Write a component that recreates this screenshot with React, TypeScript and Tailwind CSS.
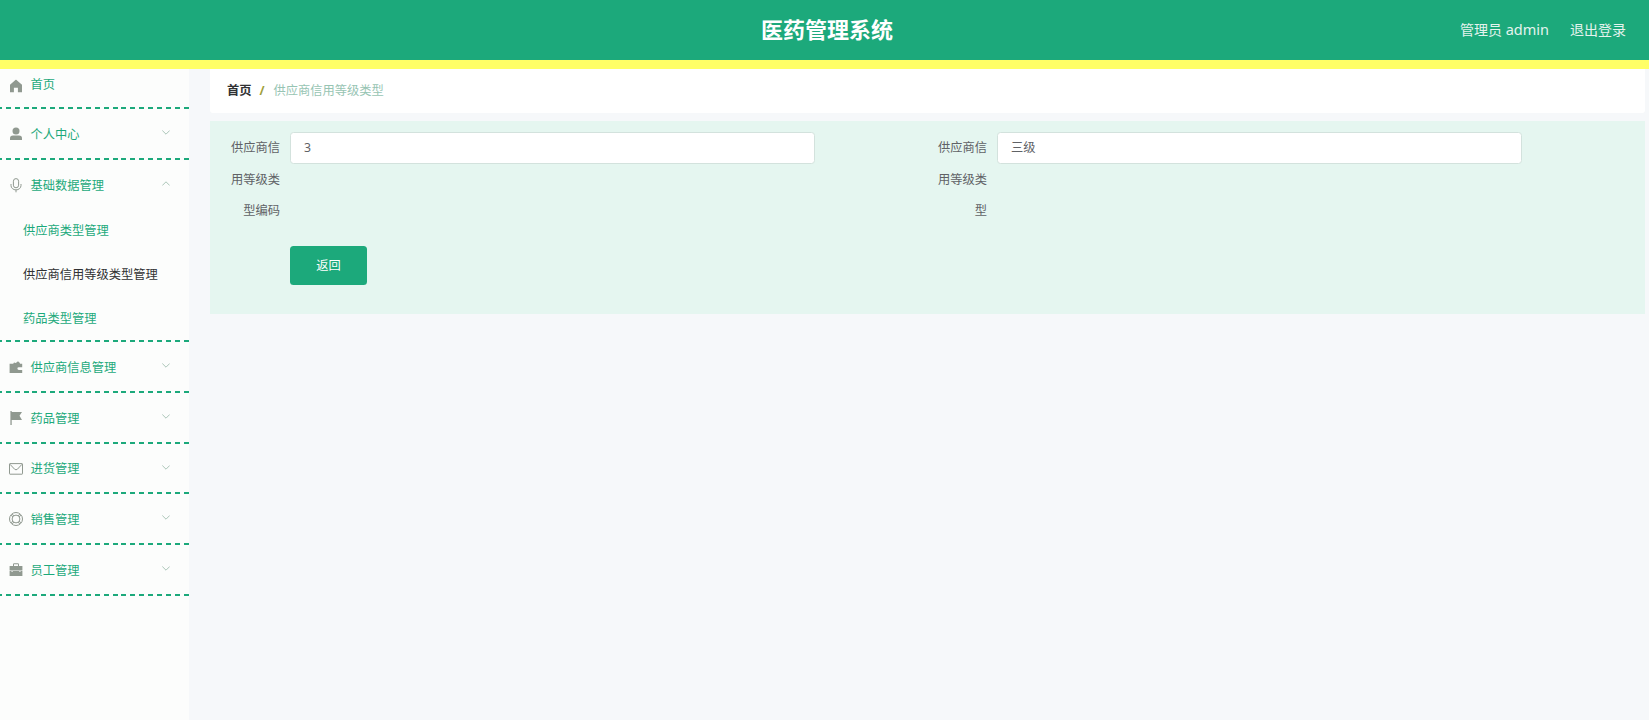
import type { ReactNode } from "react";

const icons: Record<string, ReactNode> = {
  home: <path d="M7.200 .8Q7 .6 6.700.8L1 5.800v7.400h3.900V8.800h4v4.400H13V5.800z" fill="currentColor" />,
  user: (
    <g fill="currentColor">
      <circle cx="7" cy="4" r="3.500" />
      <path d="M1 12.900v-1.600Q1 8.600 4 8.600h6q3 0 3 2.700v1.600z" />
    </g>
  ),
  mic: (
    <g fill="none" stroke="currentColor" strokeWidth="1">
      <rect x="4.400" y=".6" width="5.200" height="9.200" rx="2.600" />
      <path d="M2 6v1.500a5 4.400 0 0 0 10 0V6M7 11.900V14.300" />
    </g>
  ),
  wallet: (
    <path
      d="M.6 3.800h3.600L5 2.600l1.800.5L9 1.200l1.900 1.900v.7h2.300v3.400H9.800a1.400 1.400 0 0 0 0 2.800h3.400v3H.6z"
      fill="currentColor"
    />
  ),
  flag: <path d="M1.400 0h1.300V1H13L10.500 4.700 13 9H2.700V14H1.400z" fill="currentColor" />,
  message: (
    <g fill="none" stroke="currentColor" strokeWidth="1">
      <rect x=".5" y="1.600" width="13" height="10.600" rx=".5" />
      <path d="m1 2.300 4.700 5q1.300 1 2.600 0L13 2.300" />
    </g>
  ),
  help: (
    <g fill="none" stroke="currentColor" strokeWidth="1">
      <circle cx="7" cy="7" r="6.500" />
      <circle cx="7" cy="7" r="3.900" />
      <path d="m3.300 2 1.400 1.900m4.600 6.200 1.400 1.900M12 3.300l-1.900 1.400m-6.200 4.600L2 10.700M10.700 2 9.300 3.900m-4.600 6.200L3.300 12M2 3.300l1.900 1.400m6.200 4.600 1.900 1.400" />
    </g>
  ),
  briefcase: (
    <g fill="currentColor">
      <path d="M4 3V1.500Q4 .3 5.200.3h3.600Q10 .3 10 1.500V3H9V1.300H5V3z" />
      <path d="M.6 3h12.800v4.400H.6zM.6 8.100h1.800v.6h1.400v-.6h6.400v.6h1.400v-.6h1.800V13H.6z" />
    </g>
  ),
};

const menu = [
  { name: "首页", icon: "home" },
  { name: "个人中心", icon: "user", arrow: true },
  {
    name: "基础数据管理",
    icon: "mic",
    arrow: true,
    children: ["供应商类型管理", "供应商信用等级类型管理", "药品类型管理"],
  },
  { name: "供应商信息管理", icon: "wallet", arrow: true },
  { name: "药品管理", icon: "flag", arrow: true },
  { name: "进货管理", icon: "message", arrow: true },
  { name: "销售管理", icon: "help", arrow: true },
  { name: "员工管理", icon: "briefcase", arrow: true },
];

const activeItem = "供应商信用等级类型管理";

function Dashes() {
  return (
    <div className="h-[2px] bg-[repeating-linear-gradient(90deg,#1ca97b_0_1.900px,transparent_1.900px_5.800px,#1ca97b_5.800px_8.900px)]" />
  );
}

function Field({ label, value }: { label: string; value: string }) {
  return (
    <div className="flex w-[707px]">
      <div className="w-[70px] shrink-0 pt-px pr-[10px] pl-[10px] text-right leading-[31.500px] text-[#606266]">{label}</div>
      <div className="mt-px flex h-[32px] w-[525px] items-center rounded-[3.500px] border border-[#d3e2dd] bg-white px-[13px] pt-px text-[#606266]">
        {value}
      </div>
    </div>
  );
}

export default function App() {
  return (
    <div className="flex h-[720px] w-[1649px] flex-col overflow-hidden bg-[#f6f8fa] font-['Noto_Sans','Noto_Sans_CJK_SC',sans-serif] text-[12.250px]">
      <header className="grid h-[69px] shrink-0 grid-cols-3 items-center border-b-[9px] border-[#ffff66] bg-[#1ca97b] text-white">
        <div />
        <h1 className="pb-[2px] pl-[5px] text-center text-[22px] font-bold">医药管理系统</h1>
        <div className="flex justify-end gap-[21px] pr-[23px] pb-px text-[14px] text-[#e4f3ee]">
          <span>
            管理员 <span className="text-[14.500px]">admin</span>
          </span>
          <span>退出登录</span>
        </div>
      </header>
      <div className="flex min-h-0 grow">
        <aside className="w-[189px] shrink-0 bg-[#fcfdfc] text-[#1ca97b]">
          {menu.map((item, i) => (
            <div key={item.name}>
              <div className={i == 0 ? "flex h-[38.300px] items-center pb-[6px] pl-[9px]" : "flex h-[48.700px] items-center pl-[9px]"}>
                <svg viewBox="0 0 14 14" className="mt-[1px] h-[14px] w-[14px] overflow-visible text-[#909990]">
                  {icons[item.icon]}
                </svg>
                <span className={i == 0 ? "ml-[7.500px]" : "ml-[7.500px] pt-[3px]"}>{item.name}</span>
                {item.arrow && (
                  <svg viewBox="0 0 8 5" className="mr-[19px] mb-[2px] ml-auto h-[5px] w-[8px]">
                    <path d={item.children ? "M.3 4.500 4 .8l3.700 3.700" : "M.3.5 4 4.200 7.700.5"} fill="none" stroke="#a3bfb1" strokeWidth=".9" />
                  </svg>
                )}
              </div>
              {item.children?.map((child) => (
                <div
                  key={child}
                  className={child == activeItem ? "flex h-[43.900px] items-center pt-px pl-[23px] text-[#303133]" : "flex h-[43.900px] items-center pt-px pl-[23px]"}
                >
                  {child}
                </div>
              ))}
              <Dashes />
            </div>
          ))}
        </aside>
        <main className="mr-[4px] ml-[21px] grow">
          <div className="flex h-[44px] items-center rounded-b-[3px] bg-white pt-px pl-[17px]">
            <span className="font-bold text-[#303133]">首页</span>
            <span className="mx-[8px] font-bold text-[#a09f3c]">/</span>
            <span className="pl-px text-[#97c4b3]">供应商信用等级类型</span>
          </div>
          <div className="mt-[8px] h-[193px] bg-[#e5f6f0] pt-[10px] pl-[10px]">
            <div className="flex">
              <Field label="供应商信用等级类型编码" value="3" />
              <Field label="供应商信用等级类型" value="三级" />
            </div>
            <button className="mt-[19px] ml-[70px] flex h-[39px] w-[77px] items-center justify-center rounded-[3.500px] bg-[#1ca97b] pt-[2px] text-white">
              返回
            </button>
          </div>
        </main>
      </div>
    </div>
  );
}
